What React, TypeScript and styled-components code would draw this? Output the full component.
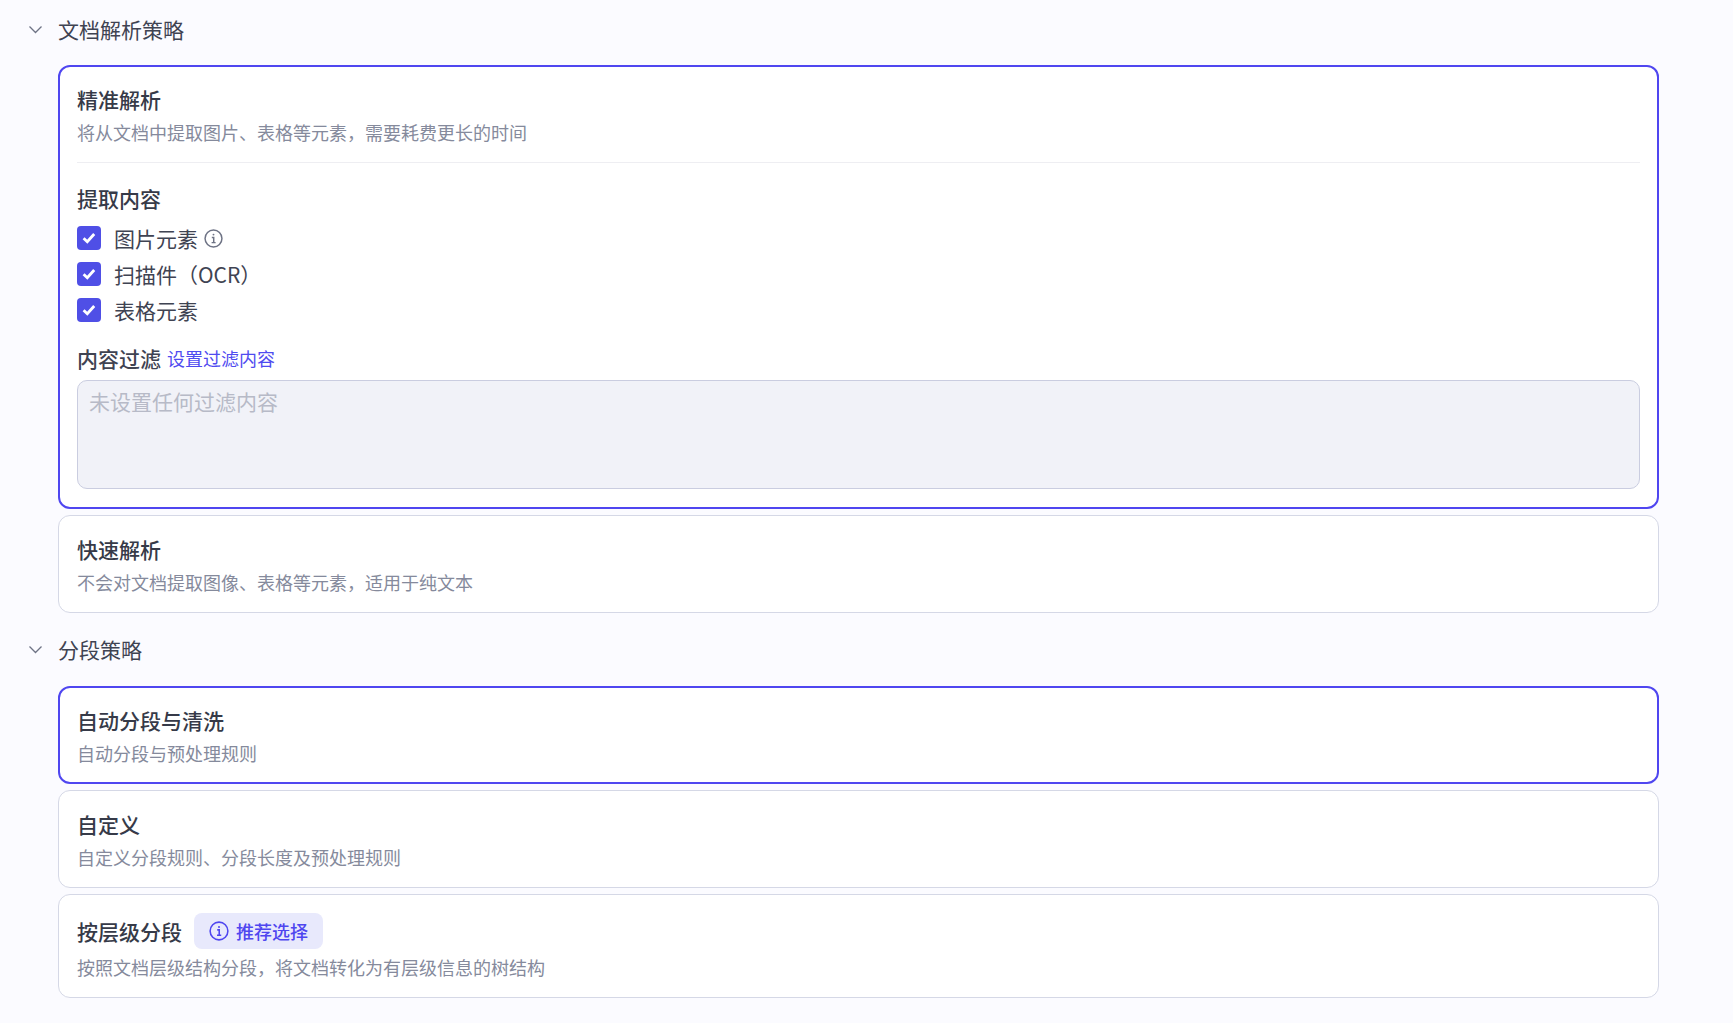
import * as React from 'react';
import styled, { createGlobalStyle } from 'styled-components';

const GlobalStyle = createGlobalStyle`
  html, body {
    margin: 0;
    padding: 0;
    background: #fbfbff;
    font-family: "Noto Sans CJK SC", "Noto Sans", sans-serif;
    color: #2e3240;
  }
`;

const Page = styled.div`
  width: 1733px;
  height: 1023px;
  overflow: hidden;
  box-sizing: border-box;
  padding-left: 28px;
  padding-right: 74px;
`;

const SectionHeader = styled.div<{ $top: number; $bottom: number }>`
  display: flex;
  align-items: center;
  gap: 15px;
  height: 30px;
  padding-top: ${(p) => p.$top}px;
  margin-bottom: ${(p) => p.$bottom}px;
  font-size: 21px;
  line-height: 30px;
  color: #3f4352;
`;

const Chevron = styled.svg`
  width: 15px;
  height: 15px;
  flex: none;
  color: #6e7385;
`;

const CardList = styled.div`
  display: flex;
  flex-direction: column;
  gap: 6px;
  margin-left: 30px;
`;

const Card = styled.div<{ $active?: boolean }>`
  box-sizing: border-box;
  background: #fff;
  border-radius: 12px;
  border: ${(p) => (p.$active ? '2px solid #4f46f0' : '1px solid #d5d8e6')};
  padding: ${(p) => (p.$active ? '16px 17px 16px' : '17px 18px 17px')};
`;

const TitleRow = styled.div`
  display: flex;
  align-items: center;
  gap: 12px;
`;

const Title = styled.div`
  font-size: 21px;
  line-height: 32px;
  font-weight: 500;
  color: #363a48;
`;

const Subtitle = styled.div`
  font-size: 18px;
  line-height: 26px;
  margin-top: 4px;
  color: #858a9c;
`;

const Divider = styled.div`
  height: 1px;
  background: #eeeef2;
  margin: 17px 0 19px;
`;

const GroupLabel = styled.div`
  font-size: 21px;
  line-height: 32px;
  font-weight: 500;
  color: #363a48;
`;

const CheckList = styled.div`
  display: flex;
  flex-direction: column;
  gap: 12px;
  margin-top: 12px;
`;

const CheckRow = styled.label`
  display: flex;
  align-items: center;
  height: 24px;
  font-size: 21px;
  color: #3f4352;
`;

const CheckBox = styled.span`
  display: flex;
  align-items: center;
  justify-content: center;
  width: 24px;
  height: 24px;
  margin-right: 13px;
  border-radius: 4px;
  background: #4f4fe6;
  color: #fff;
`;

const InfoWrap = styled.span`
  display: inline-flex;
  margin-left: 6px;
  color: #6e7385;
`;

const FilterRow = styled.div`
  display: flex;
  align-items: center;
  gap: 6px;
  margin-top: 20px;
  height: 32px;
`;

const FilterLabel = styled.span`
  font-size: 21px;
  font-weight: 500;
  color: #3f4352;
`;

const FilterLink = styled.a`
  font-size: 18px;
  color: #4f4bf0;
`;

const FilterBox = styled.div`
  box-sizing: border-box;
  height: 109px;
  margin-top: 6px;
  margin-bottom: 2px;
  padding: 4px 11px;
  border: 1px solid #cacde0;
  border-radius: 10px;
  background: #f1f2f8;
  font-size: 21px;
  line-height: 32px;
  color: #b7bac7;
`;

const Badge = styled.span`
  display: inline-flex;
  align-items: center;
  gap: 7px;
  height: 36px;
  padding: 0 15px;
  border-radius: 8px;
  background: #e8e9fc;
  color: #4f46f0;
  font-size: 18px;
  font-weight: 500;
`;

const LastRow = styled(TitleRow)`
  height: 36px;
  margin-top: 1px;
  margin-bottom: 5px;
`;

const ChevronIcon = () => (
  <Chevron viewBox="0 0 15 15" fill="none" stroke="currentColor" strokeWidth="1.3">
    <path d="M1.5 4.5 7.5 10.5 13.5 4.5" />
  </Chevron>
);

const InfoIcon = ({ size }: { size: number }) => (
  <svg width={size} height={size} viewBox="0 0 18 18" fill="none" stroke="currentColor" strokeWidth="1.4">
    <circle cx="9" cy="9" r="8" />
    <path d="M7.4 8h1.8v4.8M7.2 12.9h3.8" />
    <circle cx="9" cy="5.3" r="0.9" fill="currentColor" stroke="none" />
  </svg>
);

const CheckMark = () => (
  <svg width="14" height="12" viewBox="0 0 14 12" fill="none" stroke="currentColor" strokeWidth="2.8">
    <path d="M1.6 6.2 5.3 9.8 12.2 2" />
  </svg>
);

const checks = ['图片元素', '扫描件（OCR）', '表格元素'];

const App = () => (
  <Page>
    <GlobalStyle />
    <SectionHeader $top={14} $bottom={21}>
      <ChevronIcon />
      文档解析策略
    </SectionHeader>
    <CardList>
      <Card $active>
        <Title>精准解析</Title>
        <Subtitle>将从文档中提取图片、表格等元素，需要耗费更长的时间</Subtitle>
        <Divider />
        <GroupLabel>提取内容</GroupLabel>
        <CheckList>
          {checks.map((label, i) => (
            <CheckRow key={label}>
              <CheckBox>
                <CheckMark />
              </CheckBox>
              {label}
              {i === 0 && (
                <InfoWrap>
                  <InfoIcon size={19} />
                </InfoWrap>
              )}
            </CheckRow>
          ))}
        </CheckList>
        <FilterRow>
          <FilterLabel>内容过滤</FilterLabel>
          <FilterLink>设置过滤内容</FilterLink>
        </FilterRow>
        <FilterBox>未设置任何过滤内容</FilterBox>
      </Card>
      <Card>
        <Title>快速解析</Title>
        <Subtitle>不会对文档提取图像、表格等元素，适用于纯文本</Subtitle>
      </Card>
    </CardList>
    <SectionHeader $top={21} $bottom={22}>
      <ChevronIcon />
      分段策略
    </SectionHeader>
    <CardList>
      <Card $active>
        <Title>自动分段与清洗</Title>
        <Subtitle>自动分段与预处理规则</Subtitle>
      </Card>
      <Card>
        <Title>自定义</Title>
        <Subtitle>自定义分段规则、分段长度及预处理规则</Subtitle>
      </Card>
      <Card>
        <LastRow>
          <Title>按层级分段</Title>
          <Badge>
            <InfoIcon size={20} />
            推荐选择
          </Badge>
        </LastRow>
        <Subtitle>按照文档层级结构分段，将文档转化为有层级信息的树结构</Subtitle>
      </Card>
    </CardList>
  </Page>
);

export default App;
